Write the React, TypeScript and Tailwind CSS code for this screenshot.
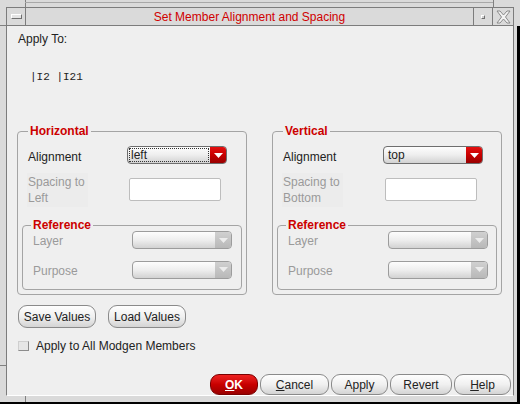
import React from "react";

const SANS = "font-['Liberation_Sans',Arial,sans-serif]";

function Caret({ color }: { color: string }) {
  return (
    <svg width="9" height="5" viewBox="0 0 9 5">
      <path d="M0 0H9L4.5 5Z" fill={color} />
    </svg>
  );
}

function Select({
  value,
  active,
  focus,
  w,
}: {
  value?: string;
  active?: boolean;
  focus?: boolean;
  w: string;
}) {
  return (
    <div
      className={`flex h-[18px] ${w} overflow-hidden rounded-[4px] border ${
        active ? "border-[#6e6e6e]" : "border-[#9c9c9c]"
      } bg-gradient-to-b from-[#fdfdfd] via-[#eeeeee] to-[#d2d2d2]`}
    >
      <div className="flex-1 p-[1px]">
        {focus ? (
          <div className="flex h-full items-center border border-dotted border-[#333] pl-[1px] text-[12px] leading-none text-[#222]">
            {value}
          </div>
        ) : (
          <div className="flex h-full items-center pl-[3px] text-[12px] leading-none text-[#222]">
            {value}
          </div>
        )}
      </div>
      <div
        className={`flex w-[16px] items-center justify-center ${
          active
            ? "bg-gradient-to-b from-[#e41010] via-[#c80000] to-[#980000]"
            : "bg-gradient-to-b from-[#d0d0d0] to-[#b8b8b8]"
        }`}
      >
        <Caret color={active ? "#ffffff" : "#ececec"} />
      </div>
    </div>
  );
}

function Group({
  title,
  alignValue,
  spacingLabel,
  alignW,
  spacingW,
  refLabelW,
}: {
  title: string;
  alignValue: string;
  spacingLabel: string;
  alignW: string;
  spacingW: string;
  refLabelW: string;
}) {
  return (
    <fieldset className="w-[230px] rounded-[4px] border border-[#a4a4a4] px-[4px] pb-[4px]">
      <legend className="ml-[6px] px-[2px] text-[12px] font-bold leading-[12px] text-[#cc0000]">
        {title}
      </legend>
      <div className="flex h-[18px] items-center pl-[6px] mt-[9px]">
        <div className={`${alignW} pt-[4px] text-[12px] leading-[14px] text-[#222]`}>Alignment</div>
        <Select value={alignValue} active focus={alignValue === "left"} w="w-[100px]" />
      </div>
      <div className="mt-[14px] flex h-[23px] items-center pl-[5px]">
        <div className={`${spacingW}`}>
          <div className="w-[61px] bg-[#ececec] py-[1px] pl-[1px] text-[12px] leading-[16px] text-[#9a9a9a]">
            Spacing to
            <br />
            {spacingLabel}
          </div>
        </div>
        <div className="h-[23px] w-[92px] rounded-[2px] border border-[#bdbdbd] bg-white" />
      </div>
      <fieldset className="mt-[19px] rounded-[4px] border border-[#a4a4a4] pb-[10px]">
        <legend className="ml-[8px] px-[2px] text-[12px] font-bold leading-[10px] text-[#cc0000]">
          Reference
        </legend>
        <div className="mt-[1px] flex h-[18px] items-center pl-[10px]">
          <div className={`${refLabelW} pt-[2px] text-[12px] leading-[14px] text-[#9a9a9a]`}>Layer</div>
          <Select w="w-[100px]" />
        </div>
        <div className="mt-[11px] flex h-[19px] items-center pl-[10px]">
          <div className={`${refLabelW} pt-[2px] text-[12px] leading-[14px] text-[#9a9a9a]`}>Purpose</div>
          <Select w="w-[100px]" />
        </div>
      </fieldset>
    </fieldset>
  );
}

function Btn({
  children,
  w,
  h = "h-[21px]",
  red,
}: {
  children: React.ReactNode;
  w: string;
  h?: string;
  red?: boolean;
}) {
  return (
    <div
      className={`${h} ${w} flex items-center justify-center rounded-[9px] border text-[12px] ${
        red
          ? "border-[#7a0000] bg-gradient-to-b from-[#ee2020] via-[#c80000] to-[#9a0000] font-bold text-white"
          : "border-[#8a8a8a] bg-gradient-to-b from-[#fefefe] via-[#f0f0f0] to-[#d4d4d4] text-[#222]"
      }`}
    >
      {children}
    </div>
  );
}

export default function App() {
  return (
    <div className={`h-[404px] w-[520px] bg-black ${SANS}`}>
      <div className="relative h-[402px] w-[520px] bg-[#dadada] px-[6px] pt-[7px]">
        {/* frame ornaments */}
        <div className="absolute left-[25px] top-0 h-[7px] w-px bg-[#808080]" />
        <div className="absolute left-[493px] top-0 h-[7px] w-px bg-[#808080]" />
        <div className="absolute left-[25px] top-[2px] h-px w-[468px] bg-[#a8a8a8]" />
        <div className="absolute left-0 top-[25px] h-px w-[6px] bg-[#808080]" />
        <div className="absolute left-0 top-[365px] h-px w-[6px] bg-[#808080]" />
        <div className="absolute left-[25px] top-[396px] h-[6px] w-px bg-[#808080]" />
        <div className="absolute right-[0px] top-[26px] h-[376px] w-[3px] bg-black" />

        <div className="flex h-[389px] w-[508px] flex-col border border-[#7c7c7c] border-b-white">
          {/* title bar */}
          <div className="flex h-[18px] border-b border-[#7c7c7c] bg-[#dadada]">
            <div className="flex w-[19px] items-center justify-center border-r border-[#7c7c7c]">
              <div className="h-[5px] w-[11px] border border-b-[#707070] border-l-white border-r-[#707070] border-t-white bg-[#e4e4e4]" />
            </div>
            <div className="flex w-[448px] items-center justify-center border-r border-[#7c7c7c] text-[12px] text-[#d00000]">
              Set Member Alignment and Spacing
            </div>
            <div className="flex w-[19px] items-center justify-center border-r border-[#7c7c7c]">
              <div className="h-[4px] w-[4px] border border-b-[#707070] border-l-white border-r-[#707070] border-t-white bg-[#d0d0d0]" />
            </div>
            <div className="flex flex-1 items-center justify-center">
              <svg width="15" height="14" viewBox="0 0 15 14">
                <path
                  d="M1 1H4L7.5 5L11 1H14L9.5 7L14 13H11L7.5 9L4 13H1L5.5 7Z"
                  fill="#f2f2f2"
                  stroke="#8a8a8a"
                  strokeWidth="1"
                />
              </svg>
            </div>
          </div>

          {/* content */}
          <div className="flex flex-1 flex-col bg-[#efefef] pl-[10px] pr-[2px]">
            <div className="mt-[6px] pl-[1px] text-[12px] leading-[14px] text-[#222]">Apply To:</div>
            <div className="mt-[24px] pl-[13px] font-['Liberation_Mono',monospace] text-[11px] leading-[14px] text-[#222]">
              |I2 |I21
            </div>
            <div className="mt-[41px] flex gap-[25px]">
              <Group
                title="Horizontal"
                alignValue="left"
                spacingLabel="Left"
                alignW="w-[99px]"
                spacingW="w-[102px]"
                refLabelW="w-[99px]"
              />
              <Group
                title="Vertical"
                alignValue="top"
                spacingLabel="Bottom"
                alignW="w-[100px]"
                spacingW="w-[103px]"
                refLabelW="w-[100px]"
              />
            </div>
            <div className="mt-[10px] flex gap-[12px] pl-[1px]">
              <Btn w="w-[78px]" h="h-[23px]">Save Values</Btn>
              <Btn w="w-[78px]" h="h-[23px]">Load Values</Btn>
            </div>
            <div className="mt-[11px] flex items-center gap-[7px] pl-[1px]">
              <div className="h-[10px] w-[11px] border border-b-[#8c8c8c] border-l-[#cfcfcf] border-r-[#8c8c8c] border-t-[#cfcfcf] bg-[#e6e6e6]" />
              <div className="text-[12px] leading-[14px] text-[#222]">Apply to All Modgen Members</div>
            </div>
            <div className="mt-auto flex justify-end gap-[2px] pb-[0px]">
              <Btn w="w-[48px]" red>
                <span className="underline">O</span>K
              </Btn>
              <Btn w="w-[69px]">
                <span className="underline">C</span>ancel
              </Btn>
              <Btn w="w-[57px]">Apply</Btn>
              <Btn w="w-[62px]">Revert</Btn>
              <Btn w="w-[57px]">
                <span className="underline">H</span>elp
              </Btn>
            </div>
          </div>
        </div>
      </div>
    </div>
  );
}
